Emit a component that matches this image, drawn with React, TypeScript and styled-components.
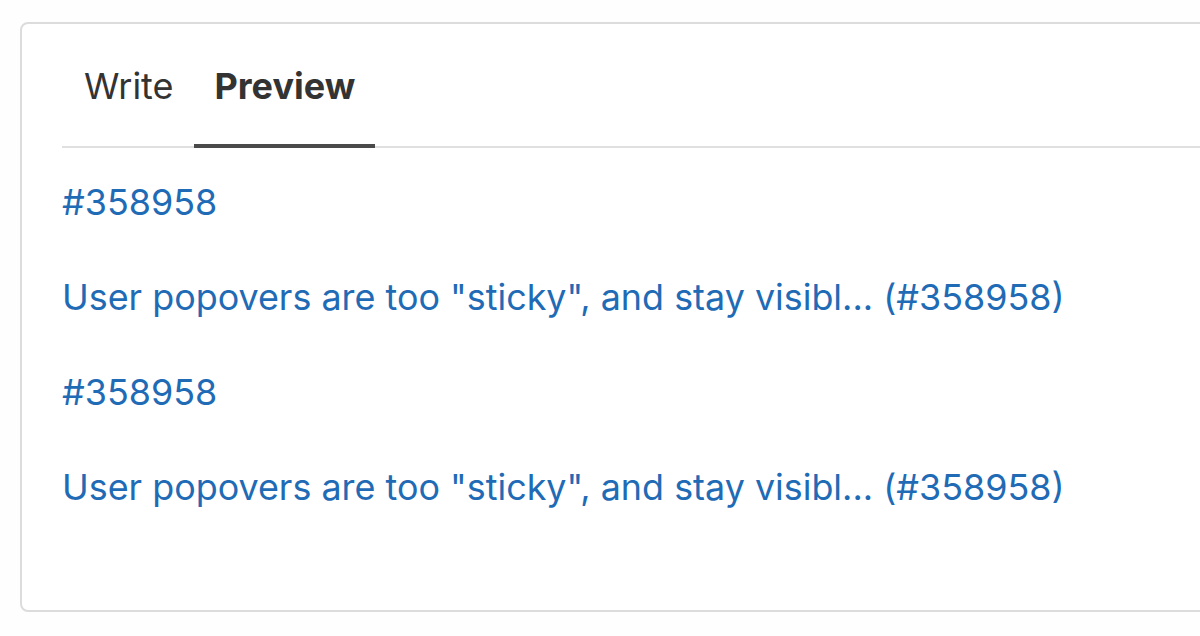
import styled, { createGlobalStyle } from 'styled-components';

const GlobalStyle = createGlobalStyle`
  html, body {
    margin: 0;
    padding: 0;
    background: #fefefe;
    font-family: Inter, "Noto Sans", sans-serif;
    -webkit-font-smoothing: antialiased;
  }
`;

const Page = styled.div`
  width: 1200px;
  height: 636px;
  padding: 22px 0 0 20px;
  box-sizing: border-box;
  overflow: hidden;
`;

const Card = styled.div`
  width: 1220px;
  height: 590px;
  box-sizing: border-box;
  border: 2px solid #dcdcdc;
  border-radius: 8px;
  background: #ffffff;
  padding: 0 0 0 40px;
`;

const TabBar = styled.div`
  display: flex;
  height: 122px;
  border-bottom: 2px solid #e0e0e0;
`;

const Tab = styled.div<{ $active?: boolean }>`
  display: flex;
  align-items: center;
  padding: 4px 20px 0 21px;
  margin-bottom: -2px;
  font-size: 36px;
  color: #333333;
  font-weight: ${(p) => (p.$active ? 700 : 400)};
  border-bottom: 4px solid ${(p) => (p.$active ? '#4a4a4a' : 'transparent')};

  &:first-child {
    padding-left: 22px;
  }
`;

const Body = styled.div`
  padding-top: 30px;
  display: flex;
  flex-direction: column;
`;

const Para = styled.p`
  margin: 0 0 46px;
  font-size: 35.9px;
  line-height: 49px;
  color: #1f6bb5;
`;

const items = [
  '#358958',
  'User popovers are too "sticky", and stay visibl... (#358958)',
  '#358958',
  'User popovers are too "sticky", and stay visibl... (#358958)',
];

export default function App() {
  return (
    <Page>
      <GlobalStyle />
      <Card>
        <TabBar>
          <Tab>Write</Tab>
          <Tab $active>Preview</Tab>
        </TabBar>
        <Body>
          {items.map((t, i) => (
            <Para key={i}>{t}</Para>
          ))}
        </Body>
      </Card>
    </Page>
  );
}
